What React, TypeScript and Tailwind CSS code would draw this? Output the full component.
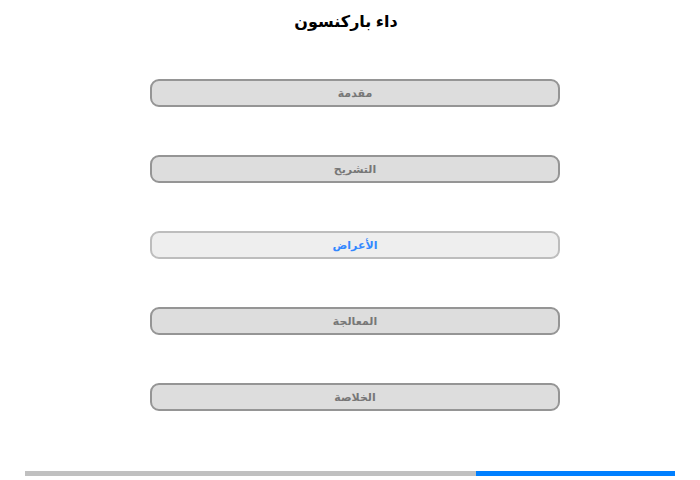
const items = ["مقدمة", "التشريح", "الأعراض", "المعالجة", "الخلاصة"];
const active = 2;

export default function App() {
  return (
    <div
      dir="rtl"
      className="w-[700px] h-[480px] bg-white flex flex-col items-center"
      style={{ fontFamily: '"Liberation Sans", "DejaVu Sans", sans-serif' }}
    >
      <h1 className="mt-[11px] mr-[8px] text-[16px] leading-[22px] font-bold text-black">داء باركنسون</h1>
      <div className="mt-[46px] mr-[-10px] flex flex-col gap-[48px]">
        {items.map((t, i) => (
          <button
            key={t}
            className={
              i === active
                ? "w-[410px] h-[28px] rounded-[9px] border-2 border-[#bdbdbd] bg-[#eeeeee] text-[#3388ff] text-[11px] font-bold"
                : "w-[410px] h-[28px] rounded-[9px] border-2 border-[#959595] bg-[#dddddd] text-[#777777] text-[11px] font-bold"
            }
          >
            {t}
          </button>
        ))}
      </div>
      <div dir="ltr" className="mt-auto mb-[4px] w-[650px] h-[5px] flex">
        <div className="w-[451px] bg-[#c0c0c0]" />
        <div className="flex-1 bg-[#0080ff]" />
      </div>
    </div>
  );
}
